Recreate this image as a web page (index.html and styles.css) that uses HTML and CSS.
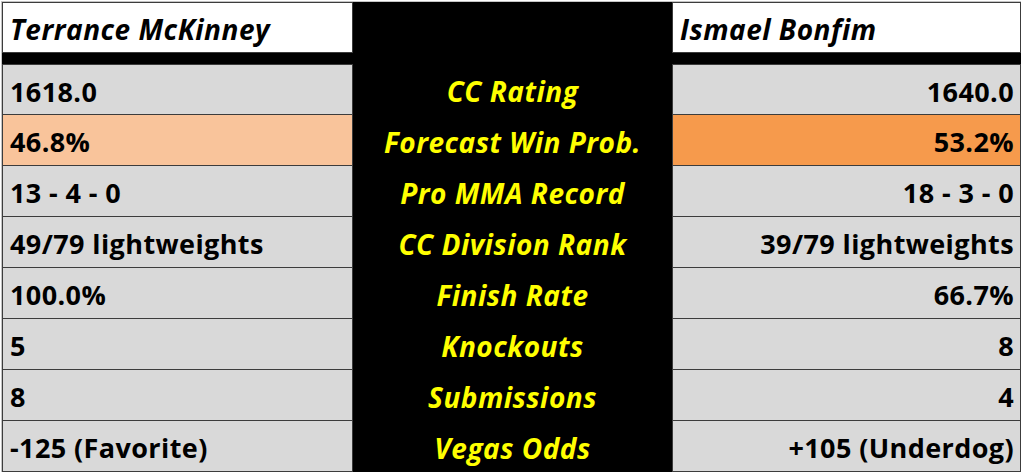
FILE: index.html
```html
<!DOCTYPE html>
<html>
<head>
<meta charset="utf-8">
<link rel="stylesheet" href="styles.css">
</head>
<body>
<div class="sheet">
  <div class="cell head">Terrance McKinney</div>
  <div class="mid head-mid"></div>
  <div class="cell head">Ismael Bonfim</div>

  <div class="gap"></div>

  <div class="cell first">1618.0</div>
  <div class="mid">CC Rating</div>
  <div class="cell first right">1640.0</div>

  <div class="cell light-orange">46.8%</div>
  <div class="mid">Forecast Win Prob.</div>
  <div class="cell orange right">53.2%</div>

  <div class="cell">13 - 4 - 0</div>
  <div class="mid">Pro MMA Record</div>
  <div class="cell right">18 - 3 - 0</div>

  <div class="cell">49/79 lightweights</div>
  <div class="mid">CC Division Rank</div>
  <div class="cell right">39/79 lightweights</div>

  <div class="cell">100.0%</div>
  <div class="mid">Finish Rate</div>
  <div class="cell right">66.7%</div>

  <div class="cell">5</div>
  <div class="mid">Knockouts</div>
  <div class="cell right">8</div>

  <div class="cell">8</div>
  <div class="mid">Submissions</div>
  <div class="cell right">4</div>

  <div class="cell">-125 (Favorite)</div>
  <div class="mid">Vegas Odds</div>
  <div class="cell right">+105 (Underdog)</div>
</div>
</body>
</html>
```
FILE: styles.css
```css
html, body {
  margin: 0;
  padding: 0;
  background: #ffffff;
}
body {
  padding: 1px 0 0 1px;
}
.sheet {
  display: grid;
  grid-template-columns: 351px 319px 349px;
  grid-template-rows: 51px 11px repeat(8, 51px);
  width: 1019px;
  background: #000;
  border-top: 1px solid #c4c4c4;
  border-left: 1px solid #c4c4c4;
  font-family: "Open Sans", "Liberation Sans", sans-serif;
  font-weight: 700;
  font-size: 27px;
  letter-spacing: 0.4px;
  color: #000;
}
.cell {
  background: #d9d9d9;
  border: 1px solid #3c3c3c;
  border-top: none;
  display: flex;
  align-items: center;
  padding: 3px 6px 0 7px;
  white-space: nowrap;
}
.cell.first {
  border-top: 1px solid #3c3c3c;
}
.cell.head {
  background: #fff;
  border-top: 1px solid #3c3c3c;
  font-style: italic;
  font-size: 28px;
  letter-spacing: 0.5px;
}
.cell.right {
  justify-content: flex-end;
}
.light-orange {
  background: #f9c49b;
}
.orange {
  background: #f69a4c;
}
.mid {
  background: #000;
  color: #ffff00;
  font-style: italic;
  font-size: 28px;
  letter-spacing: 0.5px;
  display: flex;
  align-items: center;
  justify-content: center;
  padding-top: 3px;
  white-space: nowrap;
}
.gap {
  grid-column: 1 / 4;
  background: #000;
}
```
